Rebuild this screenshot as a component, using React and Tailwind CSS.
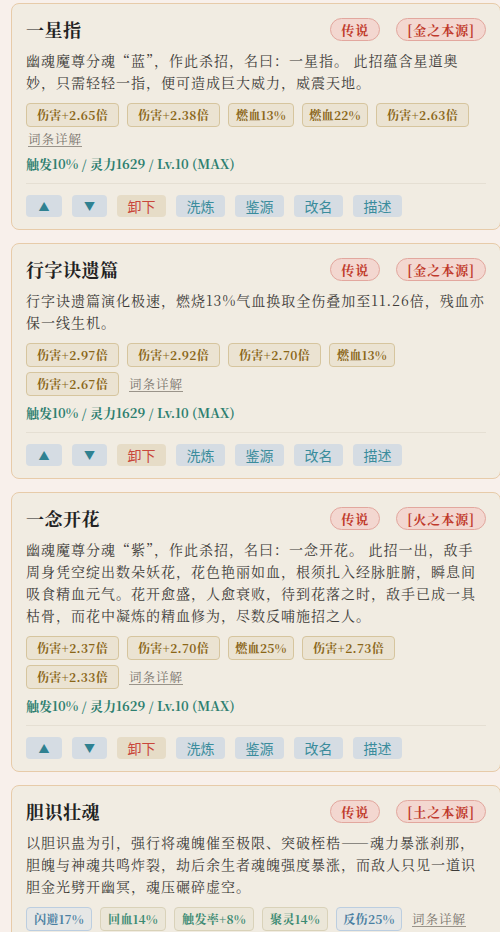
import React from "react";

const FONT = { fontFamily: '"Noto Serif CJK SC", "Noto Sans CJK SC", "Noto Sans", serif' };
const SANS = { fontFamily: '"Noto Sans CJK SC", "Noto Sans", sans-serif' };

const W93 = "w-[93px]";
const W66 = "w-[66px]";
const W79 = "w-[80px]";

const cards = [
  {
    title: "一星指",
    src: "[金之本源]",
    desc: "幽魂魔尊分魂“蓝”，作此杀招，名曰：一星指。 此招蕴含星道奥妙，只需轻轻一指，便可造成巨大威力，威震天地。",
    tags: [["伤害+2.65倍", "g", W93], ["伤害+2.38倍", "g", W93], ["燃血13%", "g", W66], ["燃血22%", "g", W66], ["伤害+2.63倍", "g", W93]],
  },
  {
    title: "行字诀遗篇",
    src: "[金之本源]",
    desc: "行字诀遗篇演化极速，燃烧13%气血换取全伤叠加至11.26倍，残血亦保一线生机。",
    tags: [["伤害+2.97倍", "g", W93], ["伤害+2.92倍", "g", W93], ["伤害+2.70倍", "g", W93], ["燃血13%", "g", W66], ["伤害+2.67倍", "g", W93]],
  },
  {
    title: "一念开花",
    src: "[火之本源]",
    desc: "幽魂魔尊分魂“紫”，作此杀招，名曰：一念开花。 此招一出，敌手周身凭空绽出数朵妖花，花色艳丽如血，根须扎入经脉脏腑，瞬息间吸食精血元气。花开愈盛，人愈衰败，待到花落之时，敌手已成一具枯骨，而花中凝炼的精血修为，尽数反哺施招之人。",
    tags: [["伤害+2.37倍", "g", W93], ["伤害+2.70倍", "g", W93], ["燃血25%", "g", W66], ["伤害+2.73倍", "g", W93], ["伤害+2.33倍", "g", W93]],
  },
  {
    title: "胆识壮魂",
    src: "[土之本源]",
    desc: "以胆识蛊为引，强行将魂魄催至极限、突破桎梏——魂力暴涨刹那，胆魄与神魂共鸣炸裂，劫后余生者魂魄强度暴涨，而敌人只见一道识胆金光劈开幽冥，魂压碾碎虚空。",
    tags: [["闪避17%", "b", W66], ["回血14%", "t", W66], ["触发率+8%", "t", W79], ["聚灵14%", "t", W66], ["反伤25%", "b", W66]],
  },
];

function Tag({ text, kind, w }) {
  const cls =
    kind === "g"
      ? "bg-[#ebe3d2] border-[#d6c59e] text-[#8a6618]"
      : kind === "b"
      ? "bg-[#e6e7e6] border-[#bccee0] text-[#4a80a2]"
      : "bg-[#ebe6d8] border-[#d9d2b9] text-[#3b8a72]";
  return (
    <span
      className={`inline-block ${w} rounded-[4px] border text-center text-[12px] font-bold leading-[22px] tracking-[0.3px] ${cls}`}
    >
      {text}
    </span>
  );
}

function Badge({ children }) {
  return (
    <span className="inline-block rounded-full border border-[#e2a79e] bg-[#f3d7d0] px-[10px] text-[13px] font-bold leading-[21px] tracking-[1px] text-[#c0392b]">
      {children}
    </span>
  );
}

function Card({ c }) {
  return (
    <div className="w-[490px] shrink-0 rounded-[8px] border border-[#e7cba9] bg-[#f1ece2] px-[14px] pb-[12px] pt-[14px]" style={FONT}>
      <div className="flex h-[23px] items-center justify-between">
        <h2 className="text-[18px] font-bold leading-[23px] tracking-[0.5px] text-[#222]">{c.title}</h2>
        <div className="flex items-center gap-[16px]">
          <Badge>传说</Badge>
          <Badge>{c.src}</Badge>
        </div>
      </div>
      <p className="mt-[8px] text-[14px] leading-[22px] tracking-[1px] text-[#3d3b38]">{c.desc}</p>
      <div className="mt-[10px] flex flex-wrap items-center gap-x-[8px] gap-y-[5px]">
        {c.tags.map(([t, k, w], i) => (
          <Tag key={i} text={t} kind={k} w={w} />
        ))}
        <span className="ml-[2px] border-b border-[#9a948a] text-[12.5px] leading-[14px] tracking-[1px] text-[#7a756d]">词条详解</span>
      </div>
      <div className="mt-[9px] text-[13px] font-bold leading-[16px] text-[#2e7f70]">触发10% / 灵力1629 / Lv.10 (MAX)</div>
      <div className="mt-[11px] h-px bg-[#e5dfd3]" />
      <div className="mt-[11px] flex items-center gap-[10px]" style={SANS}>
        <button className="h-[22px] w-[36px] rounded-[4px] bg-[#d5dce3] text-[11px] leading-[22px] text-[#2f8191]">▲</button>
        <button className="h-[22px] w-[35px] rounded-[4px] bg-[#d5dce3] text-[11px] leading-[22px] text-[#2f8191]">▼</button>
        <button className="h-[22px] w-[49px] rounded-[4px] bg-[#e6dcc7] text-[14px] leading-[22px] text-[#c9473b]">卸下</button>
        <button className="h-[22px] w-[49px] rounded-[4px] bg-[#d5dce3] text-[14px] leading-[22px] text-[#3a8c9c]">洗炼</button>
        <button className="h-[22px] w-[49px] rounded-[4px] bg-[#d5dce3] text-[14px] leading-[22px] text-[#3a8c9c]">鉴源</button>
        <button className="h-[22px] w-[49px] rounded-[4px] bg-[#d5dce3] text-[14px] leading-[22px] text-[#3a8c9c]">改名</button>
        <button className="h-[22px] w-[49px] rounded-[4px] bg-[#d5dce3] text-[14px] leading-[22px] text-[#3a8c9c]">描述</button>
      </div>
    </div>
  );
}

export default function App() {
  return (
    <div lang="zh-CN" className="min-h-[932px] w-[500px] overflow-hidden bg-[#f8f0eb] pl-[11px] pt-[3px]">
      <div className="flex flex-col gap-[13px] pb-[20px]">
        {cards.map((c, i) => (
          <Card key={i} c={c} />
        ))}
      </div>
    </div>
  );
}
